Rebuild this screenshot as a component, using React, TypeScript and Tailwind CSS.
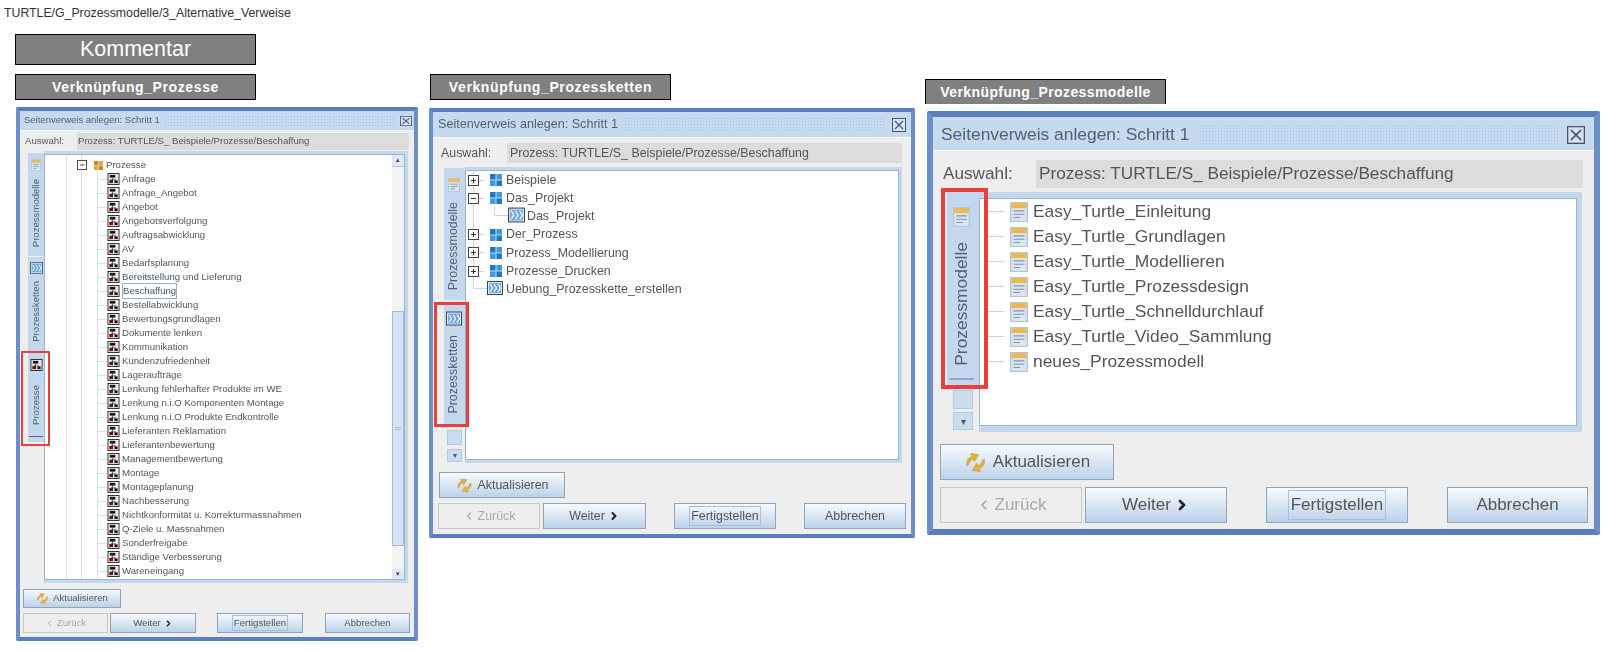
import { ChevronLeft, ChevronRight } from 'lucide-react';
import type { ReactNode } from 'react';

const processes = [
  'Anfrage', 'Anfrage_Angebot', 'Angebot', 'Angebotsverfolgung', 'Auftragsabwicklung', 'AV', 'Bedarfsplanung',
  'Bereitstellung und Lieferung', 'Beschaffung', 'Bestellabwicklung', 'Bewertungsgrundlagen', 'Dokumente lenken',
  'Kommunikation', 'Kundenzufriedenheit', 'Lageraufträge', 'Lenkung fehlerhafter Produkte im WE',
  'Lenkung n.i.O Komponenten Montage', 'Lenkung n.i.O Produkte Endkontrolle', 'Lieferanten Reklamation',
  'Lieferantenbewertung', 'Managementbewertung', 'Montage', 'Montageplanung', 'Nachbesserung',
  'Nichtkonformität u. Korrekturmassnahmen', 'Q-Ziele u. Massnahmen', 'Sonderfreigabe', 'Ständige Verbesserung',
  'Wareneingang',
];

const models = [
  'Easy_Turtle_Einleitung', 'Easy_Turtle_Grundlagen', 'Easy_Turtle_Modellieren', 'Easy_Turtle_Prozessdesign',
  'Easy_Turtle_Schnelldurchlauf', 'Easy_Turtle_Video_Sammlung', 'neues_Prozessmodell',
];

// per dialog sizes, the three screenshots are the same window at different scale
const small = {
  root: 'w-[402px] h-[534px] border-[4px]',
  title: 'h-[19px] pl-[4px] pr-[2px] text-[9.5px]',
  close: 'w-[12px] h-[10px]',
  dots: 'ml-[4px] mr-[5px] h-[11px]',
  panel: 'pl-[3px] pt-[2px]',
  auswahl: 'h-[17px] text-[9.6px]',
  label: 'w-[54px] pl-[2px]',
  field: 'w-[332px] pl-[1px]',
  main: 'mt-[1px] h-[432px] pl-[5px]',
  tree: 'w-[364px] pt-[3px] pr-[3px] pb-[3px]',
  refresh: 'mt-[6px] h-[19px] w-[98px] text-[9.6px] gap-[4px]',
  refreshIcon: 'w-[13px] h-[13px]',
  buttons: 'mt-[5px] h-[20px] text-[9.6px]',
  back: 'w-[85px]',
  next: 'w-[86px] ml-[2px]',
  finish: 'w-[86px] ml-[21px]',
  cancel: 'w-[85px] ml-[22px]',
  chevron: 'w-[9px] h-[9px]',
  focus: 'px-[1px]',
};

const medium = {
  root: 'w-[486px] h-[430px] border-[4px]',
  title: 'h-[25px] pl-[5px] pr-[5px] text-[12.6px]',
  close: 'w-[14px] h-[14px]',
  dots: 'ml-[6px] mr-[8px] h-[15px]',
  panel: 'pl-[5px] pt-[5px]',
  auswahl: 'h-[20px] text-[12.4px]',
  label: 'w-[69px] pl-[3px]',
  field: 'w-[395px] pl-[3px]',
  main: 'mt-[4px] h-[296px] pl-[6px]',
  tree: 'w-[437px] pt-[3px] pr-[3px] pb-[3px]',
  refresh: 'mt-[9px] ml-[1px] h-[26px] w-[126px] text-[12.4px] gap-[5px]',
  refreshIcon: 'w-[17px] h-[17px]',
  buttons: 'mt-[5px] h-[26px] text-[12.4px]',
  back: 'w-[102px]',
  next: 'w-[103px] ml-[3px]',
  finish: 'w-[102px] ml-[28px]',
  cancel: 'w-[102px] ml-[28px]',
  chevron: 'w-[12px] h-[12px]',
  focus: 'px-[1px]',
};

const large = {
  root: 'w-[673px] h-[424px] border-[6px]',
  title: 'h-[33px] pl-[8px] pr-[9px] pt-[2px] text-[17.4px]',
  close: 'w-[18px] h-[18px]',
  dots: 'ml-[10px] mr-[9px] h-[22px]',
  panel: 'pl-[7px] pt-[9px]',
  auswahl: 'h-[28px] text-[17.2px]',
  label: 'w-[96px] pl-[3px]',
  field: 'w-[547px] pl-[3px]',
  main: 'mt-[4px] h-[240px] pl-[7px]',
  tree: 'w-[603px] pt-[6px] pr-[5px] pb-[6px]',
  refresh: 'mt-[12px] h-[36px] w-[174px] text-[17px] gap-[6px]',
  refreshIcon: 'w-[23px] h-[23px]',
  buttons: 'mt-[7px] h-[36px] text-[17px]',
  back: 'w-[142px]',
  next: 'w-[142px] ml-[3px]',
  finish: 'w-[142px] ml-[39px]',
  cancel: 'w-[141px] ml-[39px]',
  chevron: 'w-[16px] h-[16px]',
  focus: 'px-[2px] py-[1px]',
};

type Size = typeof small;

function ProcessIcon({ className }: { className: string }) {
  return (
    <svg viewBox="0 0 13 13" className={`shrink-0 ${className}`}>
      <rect x="0.5" y="0.5" width="12" height="12" fill="#eeeeee" stroke="#262626" />
      <rect x="2.5" y="2" width="6" height="3" fill="#1c1c1c" />
      <path d="M5.5 5v2.5M3.5 7.5h6" stroke="#333" strokeWidth="0.8" />
      <rect x="2" y="7.5" width="4" height="3.5" fill="#6b1212" />
      <rect x="7.5" y="8" width="3.5" height="3" fill="#2a1010" />
    </svg>
  );
}

function ChainIcon({ className }: { className: string }) {
  return (
    <svg viewBox="0 0 16 14" className={`shrink-0 ${className}`}>
      <rect x="0.5" y="0.5" width="15" height="13" fill="#dfe9f4" stroke="#444" />
      <rect x="2" y="2" width="12" height="10" fill="#6aa8e8" />
      <path d="M3 3l2.5 4L3 11M7 3l2.5 4L7 11M11 3l2.5 4-2.5 4" fill="none" stroke="#fff" strokeWidth="1.2" />
    </svg>
  );
}

function GridIcon({ className, orange }: { className: string; orange?: boolean }) {
  const a = orange ? '#c98a1e' : '#1f78c4';
  const b = orange ? '#e2a93c' : '#3f9ae0';
  return (
    <svg viewBox="0 0 12 12" className={`shrink-0 ${className}`}>
      <rect width="12" height="12" fill={b} />
      <rect width="6" height="6" fill={a} />
      <rect x="6" y="6" width="6" height="6" fill={a} />
      <path d="M6 0v12M0 6h12" stroke="#dcebf8" strokeWidth="0.8" />
    </svg>
  );
}

function ModelIcon({ className }: { className: string }) {
  return (
    <svg viewBox="0 0 13 18" preserveAspectRatio="none" className={`shrink-0 ${className}`}>
      <rect x="0.5" y="0.5" width="12" height="17" fill="#dbe6f2" stroke="#b5c4d6" />
      <rect x="1" y="1" width="11" height="4.5" fill="#eab94f" />
      <path d="M2.5 8h8M2.5 11h8M2.5 14h5" stroke="#8094ad" />
    </svg>
  );
}

function RefreshIcon({ className }: { className: string }) {
  return (
    <svg viewBox="0 0 16 16" className={`shrink-0 ${className}`}>
      <g fill="#e3b03c" stroke="#c4902a" strokeWidth="0.3" transform="rotate(-25 8 8)">
        <path d="M1.5 7.5C2 4.5 4.5 3 7.5 3V.8L12.5 4 7.5 7.2V5.2C5.5 5.2 3.8 6 2.8 7.5z" />
        <path d="M14.5 8.5C14 11.5 11.500 13 8.500 13v2.200L3.500 12l5-3.200v2c2 0 3.700-.8 4.700-2.300z" />
      </g>
    </svg>
  );
}

function CloseBox({ className }: { className: string }) {
  return (
    <svg viewBox="0 0 14 14" preserveAspectRatio="none" className={`shrink-0 ${className}`}>
      <rect x="0.5" y="0.5" width="13" height="13" fill="#d5e3f3" stroke="#4a5668" />
      <path d="M3 3l8 8M11 3l-8 8" stroke="#4a5668" strokeWidth="1.2" />
    </svg>
  );
}

function Expander({ open, className }: { open?: boolean; className: string }) {
  return (
    <svg viewBox="0 0 11 11" className={`shrink-0 ${className}`}>
      <rect x="0.5" y="0.5" width="10" height="10" fill="#fff" stroke="#444" />
      <path d={open ? 'M3 5.5h5' : 'M3 5.5h5M5.5 3v5'} stroke="#333" />
    </svg>
  );
}

function Btn({ className, disabled, children }: { className: string; disabled?: boolean; children: ReactNode }) {
  return (
    <div
      className={`flex items-center justify-center border ${
        disabled
          ? 'border-[#c9c9c9] bg-[#eeeeee] text-[#a9a9a9]'
          : 'border-[#8fa3b9] bg-gradient-to-b from-[#f7fafd] to-[#bcd2e9] text-[#555]'
      } ${className}`}
    >
      {children}
    </div>
  );
}

function Dialog({ size, tabs, children }: { size: Size; tabs: ReactNode; children: ReactNode }) {
  return (
    <div className={`flex flex-col rounded-[2px] border-[#6c8fca] border-t-[#5a7dbd] border-b-[#5a7dbd] blur-[0.4px] ${size.root}`}>
      <div className={`flex items-center bg-[#c5d9ef] text-[#556070] ${size.title}`}>
        <span className="whitespace-nowrap">Seitenverweis anlegen: Schritt 1</span>
        <div className={`flex-1 bg-[radial-gradient(#a5c1e4_1px,transparent_1px)] bg-[length:3px_3px] ${size.dots}`} />
        <CloseBox className={size.close} />
      </div>
      <div className={`flex-1 border-t border-[#f7f7f7] bg-[#eeeeee] text-[#555] ${size.panel}`}>
        <div className={`flex items-center ${size.auswahl}`}>
          <span className={size.label}>Auswahl:</span>
          <div className={`flex h-full items-center bg-[#dcdcdc] whitespace-nowrap ${size.field}`}>
            Prozess: TURTLE/S_ Beispiele/Prozesse/Beschaffung
          </div>
        </div>
        <div className={`flex ${size.main}`}>
          {tabs}
          <div className={`bg-[#c3d7ee] ${size.tree}`}>
            <div className="flex h-full overflow-hidden border border-[#9fb3c8] bg-white">{children}</div>
          </div>
        </div>
        <Btn className={size.refresh}>
          <RefreshIcon className={size.refreshIcon} />
          Aktualisieren
        </Btn>
        <div className={`flex ${size.buttons}`}>
          <Btn disabled className={`gap-[3px] ${size.back}`}>
            <ChevronLeft className={size.chevron} strokeWidth={2.5} />
            Zurück
          </Btn>
          <Btn className={`gap-[3px] ${size.next}`}>
            Weiter
            <ChevronRight className={`text-[#222] ${size.chevron}`} strokeWidth={4} />
          </Btn>
          <Btn className={size.finish}>
            <span className={`border border-[#a7bfd8] ${size.focus}`}>Fertigstellen</span>
          </Btn>
          <Btn className={size.cancel}>Abbrechen</Btn>
        </div>
      </div>
    </div>
  );
}

function Caption({ className, children }: { className: string; children: ReactNode }) {
  return (
    <div className={`flex items-center justify-center border border-black bg-[#808080] text-white whitespace-nowrap ${className}`}>
      {children}
    </div>
  );
}

function VerticalText({ className, children }: { className: string; children: ReactNode }) {
  return (
    <span className={`rotate-180 whitespace-nowrap text-[#556070] [writing-mode:vertical-rl] ${className}`}>
      {children}
    </span>
  );
}

function ProcessTabs() {
  return (
    <div className="relative mt-[2px] w-[16px] shrink-0">
      <div className="flex h-[103px] flex-col items-center gap-[8px] bg-[#c3d7ee] pt-[6px]">
        <ModelIcon className="h-[12px] w-[10px]" />
        <VerticalText className="text-[9.6px]">Prozessmodelle</VerticalText>
      </div>
      <div className="mt-[1px] flex h-[88px] flex-col items-center gap-[7px] bg-[#c3d7ee] pt-[5px]">
        <ChainIcon className="h-[12px] w-[13px]" />
        <VerticalText className="text-[9.6px]">Prozessketten</VerticalText>
      </div>
      <div className="flex h-[97px] flex-col items-center bg-[#c3d7ee] pt-[14px]">
        <ProcessIcon className="h-[12px] w-[13px]" />
        <VerticalText className="mt-[14px] text-[9.6px]">Prozesse</VerticalText>
        <div className="mt-[11px] h-px w-[14px] bg-[#667]" />
      </div>
      <div className="absolute top-[198px] -left-[7px] h-[95px] w-[29px] border-[2.5px] border-[#e8403c]" />
    </div>
  );
}

function ChainTabs() {
  return (
    <div className="relative mt-[1px] w-[21px] shrink-0">
      <div className="flex h-[132px] flex-col items-center gap-[10px] bg-[#c3d7ee] pt-[10px] pr-[2px]">
        <ModelIcon className="h-[14px] w-[12px]" />
        <VerticalText className="text-[12.4px]">Prozessmodelle</VerticalText>
      </div>
      <div className="mt-[2px] flex h-[124px] flex-col items-center gap-[9px] bg-[#c3d7ee] pt-[9px] pr-[2px]">
        <ChainIcon className="h-[15px] w-[16px]" />
        <VerticalText className="text-[12.4px]">Prozessketten</VerticalText>
      </div>
      <div className="mt-[4px] ml-[3px] h-[15px] w-[15px] border border-[#b4c8de] bg-[#c9dcf0]" />
      <div className="mt-[4px] ml-[3px] flex h-[13px] w-[15px] items-center justify-center border border-[#b4c8de] bg-[#c9dcf0] text-[8px] text-[#556]">▾</div>
      <div className="absolute top-[134px] -left-[10px] h-[125px] w-[35px] border-[3px] border-[#e8403c]" />
    </div>
  );
}

function ModelTabs() {
  return (
    <div className="relative w-[32px] shrink-0">
      <div className="flex h-[193px] flex-col items-center bg-[#c3d7ee] pt-[15px] pr-[4px]">
        <ModelIcon className="h-[20px] w-[17px]" />
        <VerticalText className="mt-[15px] text-[17.4px]">Prozessmodelle</VerticalText>
        <div className="mt-[12px] h-[2px] w-[25px] bg-[#9aa8b8]" />
      </div>
      <div className="mt-[5px] ml-[6px] h-[19px] w-[20px] border border-[#b4c8de] bg-[#c9dcf0]" />
      <div className="mt-[3px] ml-[6px] flex h-[18px] w-[20px] items-center justify-center border border-[#b4c8de] bg-[#c9dcf0] text-[10px] text-[#556]">▾</div>
      <div className="absolute -top-[4px] -left-[6px] h-[201px] w-[47px] border-[4px] border-[#e8403c]" />
    </div>
  );
}

function ProcessTree() {
  return (
    <>
      <div className="min-w-0 flex-1 text-[9.6px] text-[#555]">
        <div className="ml-[21px] h-full border-l border-[#d3e0ee]">
          <div className="ml-[14px] h-full border-l border-[#d3e0ee] pt-[3px]">
            <div className="flex h-[14px] items-center">
              <Expander open className="-ml-[5px] h-[10px] w-[10px]" />
              <GridIcon orange className="ml-[7px] h-[9px] w-[9px]" />
              <span className="ml-[3px]">Prozesse</span>
            </div>
            <div className="ml-[15px] border-l border-[#d3e0ee]">
              {processes.map((name) => (
                <div key={name} className="flex h-[14px] items-center whitespace-nowrap">
                  <div className="h-px w-[9px] shrink-0 bg-[#d3e0ee]" />
                  <ProcessIcon className="h-[12px] w-[13px]" />
                  <span className={`ml-[2px] ${name === 'Beschaffung' ? 'border border-[#8fb0d8]' : ''}`}>{name}</span>
                </div>
              ))}
            </div>
          </div>
        </div>
      </div>
      <div className="flex w-[12px] shrink-0 flex-col bg-[#f2f2f2]">
        <div className="flex h-[12px] items-center justify-center border-b border-[#b4c8de] bg-[#dce8f5] text-[7px] text-[#444]">▴</div>
        <div className="mt-[144px] flex h-[235px] items-center justify-center border border-[#9dbbe0] bg-[#d5e3f3]">
          <div className="h-[3px] w-[6px] border-y border-[#a9bfe0]" />
        </div>
        <div className="mt-[23px] flex h-[10px] items-center justify-center bg-[#dce8f5] text-[7px] text-[#444]">▾</div>
      </div>
    </>
  );
}

function ChainRow({ name, open }: { name: string; open?: boolean }) {
  return (
    <div className="flex h-[18.2px] items-center">
      <Expander open={open} className="-ml-[6px] h-[11px] w-[11px]" />
      <div className="h-px w-[5px] bg-[#c8d8ea]" />
      <GridIcon className="ml-[6px] h-[12px] w-[12px]" />
      <span className="ml-[4px]">{name}</span>
    </div>
  );
}

function ChainTree() {
  return (
    <div className="pl-[2px] text-[12.4px] whitespace-nowrap text-[#555]">
      <div className="ml-[5px] border-l border-[#c8d8ea]">
        <ChainRow name="Beispiele" />
        <ChainRow name="Das_Projekt" open />
        <div className="flex h-[18.2px] items-start pl-[20px]">
          <div className="h-[9px] w-[14px] border-b border-l border-[#c8d8ea]" />
          <ChainIcon className="h-[16px] w-[17px]" />
          <span className="ml-[2px]">Das_Projekt</span>
        </div>
        <ChainRow name="Der_Prozess" />
        <ChainRow name="Prozess_Modellierung" />
        <ChainRow name="Prozesse_Drucken" />
      </div>
      <div className="flex h-[18.2px] items-start pl-[5px]">
        <div className="h-[9px] w-[14px] border-b border-l border-[#c8d8ea]" />
        <ChainIcon className="h-[16px] w-[16px]" />
        <span className="ml-[3px]">Uebung_Prozesskette_erstellen</span>
      </div>
    </div>
  );
}

function ModelTree() {
  return (
    <div className="pl-[8px] text-[17.4px] whitespace-nowrap text-[#555]">
      {models.map((name) => (
        <div key={name} className="flex h-[25px] items-center">
          <div className="h-px w-[16px] bg-[#c8d8ea]" />
          <ModelIcon className="ml-[6px] h-[20px] w-[18px]" />
          <span className="ml-[5px]">{name}</span>
        </div>
      ))}
    </div>
  );
}

export default function App() {
  return (
    <div className="h-[652px] w-[1613px] overflow-hidden bg-white font-['Liberation_Sans',Arial,sans-serif]">
      <div className="pt-[5px] pl-[4px] text-[12.3px] leading-[16px] text-[#333]">TURTLE/G_Prozessmodelle/3_Alternative_Verweise</div>
      <Caption className="mt-[13px] ml-[15px] h-[31px] w-[241px] text-[21.5px]">Kommentar</Caption>
      <div className="mt-[9px] flex items-start">
        <div className="ml-[15px] w-[403px]">
          <Caption className="h-[26px] w-[241px] text-[14px] font-bold tracking-[0.6px]">Verknüpfung_Prozesse</Caption>
          <div className="mt-[7px] ml-px">
            <Dialog size={small} tabs={<ProcessTabs />}>
              <ProcessTree />
            </Dialog>
          </div>
        </div>
        <div className="ml-[11px] w-[486px]">
          <Caption className="ml-px h-[26px] w-[241px] text-[14px] font-bold tracking-[0.6px]">Verknüpfung_Prozessketten</Caption>
          <div className="mt-[8px]">
            <Dialog size={medium} tabs={<ChainTabs />}>
              <ChainTree />
            </Dialog>
          </div>
        </div>
        <div className="ml-[10px] w-[675px] pt-[5px]">
          <Caption className="h-[25px] w-[241px] border-b-0 text-[14px] font-bold tracking-[0.4px]">Verknüpfung_Prozessmodelle</Caption>
          <div className="mt-[7px] ml-[2px]">
            <Dialog size={large} tabs={<ModelTabs />}>
              <ModelTree />
            </Dialog>
          </div>
        </div>
      </div>
    </div>
  );
}
